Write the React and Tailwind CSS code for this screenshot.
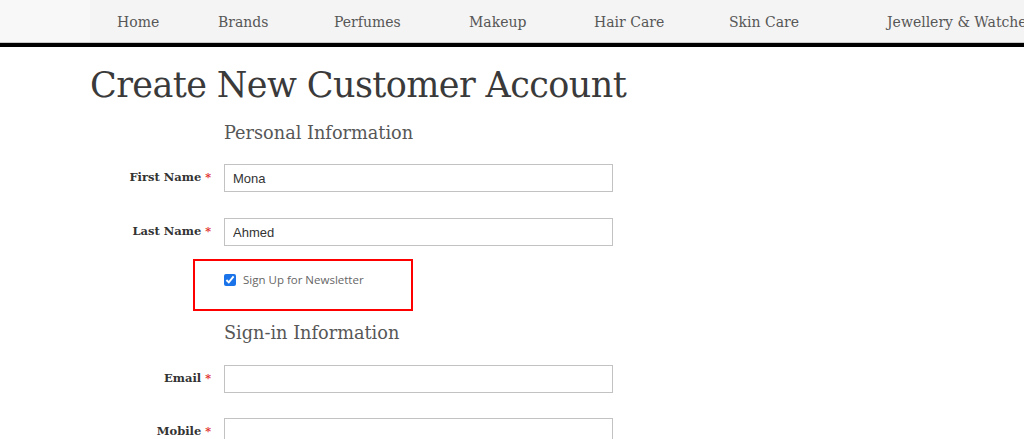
import React from "react";

const slab = { fontFamily: '"DejaVu Serif", "Liberation Serif", serif' };

function Field({ label, value }) {
  return (
    <div className="flex items-center h-[28px]">
      <div className="w-[134px] pr-[13px] text-right text-[11.5px] font-bold text-[#333]" style={slab}>
        {label}
        <span className="text-[#e02b27] ml-[4px] text-[11px]">*</span>
      </div>
      <input
        readOnly
        value={value}
        className="w-[389px] h-[28px] border border-[#c2c2c2] bg-white px-[8px] text-[13px] text-[#333] outline-none"
        style={{ fontFamily: '"Liberation Sans", Arial, sans-serif' }}
      />
    </div>
  );
}

export default function App() {
  const nav = ["Home", "Brands", "Perfumes", "Makeup", "Hair Care", "Skin Care", "Jewellery & Watches"];
  const navX = [117, 218, 334, 469, 594, 729, 887];
  return (
    <div className="w-[1024px] h-[439px] overflow-hidden bg-white">
      <div className="h-[43px] bg-[#f8f8f8] border-b border-[#c8c8c8]">
        <div className="ml-[90px] h-full bg-[#f4f4f4] flex items-center pt-[3px] overflow-hidden">
          {nav.map((n, i) => (
            <span
              key={n}
              className="shrink-0 text-[14px] text-[#575757] whitespace-nowrap"
              style={{ ...slab, marginLeft: i === 0 ? 27 : 0, width: i < nav.length - 1 ? navX[i + 1] - navX[i] : "auto" }}
            >
              {n}
            </span>
          ))}
        </div>
      </div>
      <div className="h-[4px] bg-black" />
      <div className="pl-[90px]">
        <h1 className="mt-[14px] text-[35px] leading-[48px] text-[#3a3a3a] tracking-[-0.6px]" style={slab}>
          Create New Customer Account
        </h1>
        <h2 className="mt-[12px] ml-[134px] text-[17.7px] leading-[24px] text-[#575757]" style={slab}>
          Personal Information
        </h2>
        <div className="mt-[19px] flex flex-col gap-[26px]">
          <Field label="First Name" value="Mona" />
          <Field label="Last Name" value="Ahmed" />
        </div>
        <div className="mt-[13px] ml-[103px] w-[220px] h-[52px] border-2 border-[#ff0000] flex items-center pl-[29px] pb-[10px]">
          <input type="checkbox" readOnly checked className="w-[12px] h-[12px] accent-[#1a73e8]" />
          <span className="ml-[7px] text-[11.5px] text-[#666]" style={{ fontFamily: '"Open Sans", "Noto Sans", sans-serif' }}>
            Sign Up for Newsletter
          </span>
        </div>
        <h2 className="mt-[10px] ml-[134px] text-[17.7px] leading-[24px] text-[#575757]" style={slab}>
          Sign-in Information
        </h2>
        <div className="mt-[20px] flex flex-col gap-[25px]">
          <Field label="Email" value="" />
          <Field label="Mobile" value="" />
        </div>
      </div>
    </div>
  );
}
